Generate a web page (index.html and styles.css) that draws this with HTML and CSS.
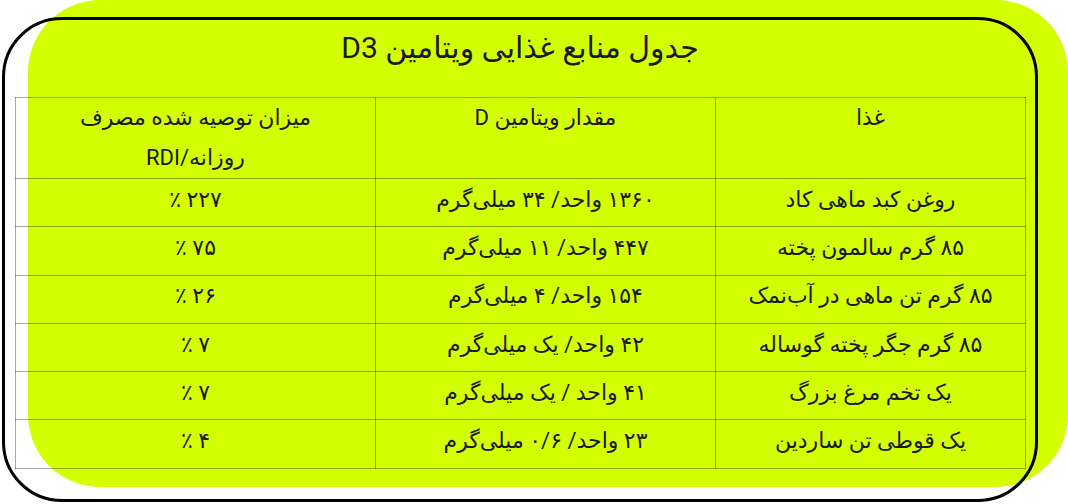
FILE: index.html
```html
<!DOCTYPE html>
<html lang="fa">
<head>
<meta charset="utf-8">
<title>جدول منابع غذایی ویتامین D3</title>
<link rel="stylesheet" href="styles.css">
</head>
<body>
<div class="stage">
  <div class="frame">
    <h1 class="title">جدول منابع غذایی ویتامین D3</h1>
    <table class="vt">
      <colgroup>
        <col class="c-food">
        <col class="c-amount">
        <col class="c-rdi">
      </colgroup>
      <thead>
        <tr>
          <th>غذا</th>
          <th>مقدار ویتامین D</th>
          <th>میزان توصیه شده مصرف<br>روزانه/RDI</th>
        </tr>
      </thead>
      <tbody>
        <tr><td>روغن کبد ماهی کاد</td><td>۱۳۶۰ واحد/ ۳۴ میلی‌گرم</td><td>۲۲۷ ٪</td></tr>
        <tr><td>۸۵ گرم سالمون پخته</td><td>۴۴۷ واحد/ ۱۱ میلی‌گرم</td><td>۷۵ ٪</td></tr>
        <tr><td>۸۵ گرم تن ماهی در آب‌نمک</td><td>۱۵۴ واحد/ ۴ میلی‌گرم</td><td>۲۶ ٪</td></tr>
        <tr><td>۸۵ گرم جگر پخته گوساله</td><td>۴۲ واحد/ یک میلی‌گرم</td><td>۷ ٪</td></tr>
        <tr><td>یک تخم مرغ بزرگ</td><td>۴۱ واحد / یک میلی‌گرم</td><td>۷ ٪</td></tr>
        <tr><td>یک قوطی تن ساردین</td><td>۲۳ واحد/ ۰/۶ میلی‌گرم</td><td>۴ ٪</td></tr>
      </tbody>
    </table>
  </div>
</div>
</body>
</html>
```

FILE: styles.css
```css
html, body {
  margin: 0;
  padding: 0;
  background: #ffffff;
}

.stage {
  position: relative;
  width: 1068px;
  height: 504px;
  overflow: hidden;
  font-family: Roboto, "DejaVu Sans", sans-serif;
  color: #1a1a1a;
}

/* decorative lime blob behind the framed card */
.stage::before {
  content: "";
  position: absolute;
  left: 28px;
  top: 0;
  width: 1040px;
  height: 487px;
  border-radius: 72px;
  background: #d4ff00;
  z-index: 0;
}

.frame {
  position: relative;
  z-index: 1;
  box-sizing: border-box;
  margin: 17px 0 0 2px;
  width: 1036px;
  height: 485px;
  border: 3px solid #000;
  border-radius: 60px;
  padding: 0 10px;
}

.title {
  margin: 8px 0 0;
  height: 69px;
  line-height: 40px;
  text-align: center;
  font-size: 30px;
  font-weight: normal;
  direction: rtl;
}

.vt {
  direction: rtl;
  width: 1010px;
  border-collapse: collapse;
  table-layout: fixed;
}

.c-food { width: 310px; }
.c-amount { width: 340px; }
.c-rdi { width: 360px; }

.vt th,
.vt td {
  border: 1px solid rgba(30, 30, 30, 0.38);
  text-align: center;
  font-weight: normal;
  font-size: 22px;
  padding: 0 4px;
}

.vt th {
  height: 80px;
  vertical-align: top;
  line-height: 40px;
}

.vt td {
  height: 41.3px;
  padding-bottom: 6px;
  line-height: 36px;
  vertical-align: middle;
}
```
